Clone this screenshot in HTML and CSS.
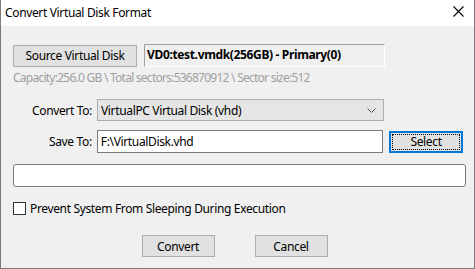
FILE: index.html
```html
<!DOCTYPE html>
<html lang="en">
<head>
    <meta charset="UTF-8">
    <title>Convert Virtual Disk Format</title>
    <link rel="stylesheet" href="styles.css">
</head>
<body>
    <div class="window">
        <div class="titlebar">
            <span class="title">Convert Virtual Disk Format</span>
            <svg class="close" width="11" height="11" viewBox="0 0 11 11">
                <path d="M0.5 0.5 L10.5 10.5 M10.5 0.5 L0.5 10.5" stroke="#000" stroke-width="1.1" fill="none"/>
            </svg>
        </div>

        <div class="content">
            <div class="source-row">
                <button class="btn source-btn">Source Virtual Disk</button>
                <div class="source-field">VD0:test.vmdk(256GB) - Primary(0)</div>
            </div>
            <div class="info">Capacity:256.0 GB \ Total sectors:536870912 \ Sector size:512</div>

            <div class="form-row convert-row">
                <label class="label">Convert To:</label>
                <div class="combo">
                    <span>VirtualPC Virtual Disk (vhd)</span>
                    <svg width="9" height="5" viewBox="0 0 9 5">
                        <path d="M0.5 0.5 L4.5 4.5 L8.5 0.5" stroke="#555" stroke-width="1" fill="none"/>
                    </svg>
                </div>
            </div>

            <div class="form-row save-row">
                <label class="label">Save To:</label>
                <input class="path-input" type="text" value="F:\VirtualDisk.vhd">
                <button class="btn select-btn"><span>Select</span></button>
            </div>

            <div class="progress"></div>

            <div class="check-row">
                <input type="checkbox" class="check">
                <span>Prevent System From Sleeping During Execution</span>
            </div>

            <div class="actions">
                <button class="btn action-btn">Convert</button>
                <button class="btn action-btn">Cancel</button>
            </div>
        </div>
    </div>
</body>
</html>
```

FILE: styles.css
```css
* {
    box-sizing: border-box;
}
body {
    margin: 0;
    font-family: "Noto Sans", "Open Sans", sans-serif;
    font-size: 12px;
    letter-spacing: -0.35px;
    color: #000;
}
.window {
    width: 475px;
    height: 269px;
    border: 1px solid #7a7a7a;
    border-top: none;
    background: #f0f0f0;
    display: flex;
    flex-direction: column;
}
.titlebar {
    height: 26px;
    background: #fff;
    display: flex;
    align-items: center;
    justify-content: space-between;
    padding: 0 10px 0 4px;
    margin: 0 -1px;
    border-left: 1px solid #7a7a7a;
    border-right: 1px solid #7a7a7a;
}
.title {
    font-size: 12px;
    margin-top: -2px;
}
.close {
    margin-top: -3px;
}
.content {
    padding: 0 11px;
    display: flex;
    flex-direction: column;
}
.btn {
    font-family: inherit;
    font-size: 12px;
    letter-spacing: inherit;
    color: #000;
    background: #e1e1e1;
    border: 1px solid #adadad;
    padding: 0;
    height: 22px;
}
.source-row {
    margin-top: 18px;
    height: 23px;
    display: flex;
    align-items: center;
    gap: 7px;
}
.source-btn {
    width: 124px;
    margin-left: 1px;
}
.source-field {
    width: 241px;
    height: 23px;
    border: 1px solid #a0a0a0;
    border-right-color: #fff;
    border-bottom-color: #fff;
    font-weight: bold;
    line-height: 20px;
    padding-left: 2px;
}
.info {
    margin-top: 3px;
    line-height: 16px;
    color: #a0a0a0;
    padding-left: 1px;
    letter-spacing: -0.75px;
}
.form-row {
    display: flex;
    align-items: center;
}
.label {
    width: 80px;
    text-align: right;
    margin-right: 5px;
}
.convert-row {
    margin-top: 13px;
    height: 22px;
}
.combo {
    width: 287px;
    height: 22px;
    background: #e5e5e5;
    border: 1px solid #adadad;
    display: flex;
    align-items: center;
    justify-content: space-between;
    padding: 0 7px 0 3px;
}
.save-row {
    margin-top: 9px;
    height: 23px;
}
.path-input {
    width: 287px;
    height: 23px;
    border: 1px solid #7a7a7a;
    background: #fff;
    font-family: inherit;
    font-size: 12px;
    letter-spacing: inherit;
    padding: 0 3px;
    margin: 0;
    outline: none;
}
.select-btn {
    width: 74px;
    margin-left: 6px;
    border: 2px solid #0078d7;
    position: relative;
}
.select-btn span {
    position: absolute;
    inset: 1px;
    border: 1px dotted #000;
    display: flex;
    align-items: center;
    justify-content: center;
}
.progress {
    margin-top: 11px;
    margin-left: 1px;
    width: 453px;
    height: 23px;
    background: #fff;
    border: 1px solid #7a7a7a;
    border-radius: 3px;
}
.check-row {
    margin-top: 15px;
    height: 13px;
    display: flex;
    align-items: center;
    gap: 4px;
    padding-left: 1px;
}
.check {
    appearance: none;
    width: 13px;
    height: 13px;
    margin: 0;
    border: 1px solid #333;
    background: #fff;
}
.actions {
    margin-top: 20px;
    display: flex;
    justify-content: center;
    gap: 40px;
    padding-right: 6px;
}
.action-btn {
    width: 73px;
}
```
